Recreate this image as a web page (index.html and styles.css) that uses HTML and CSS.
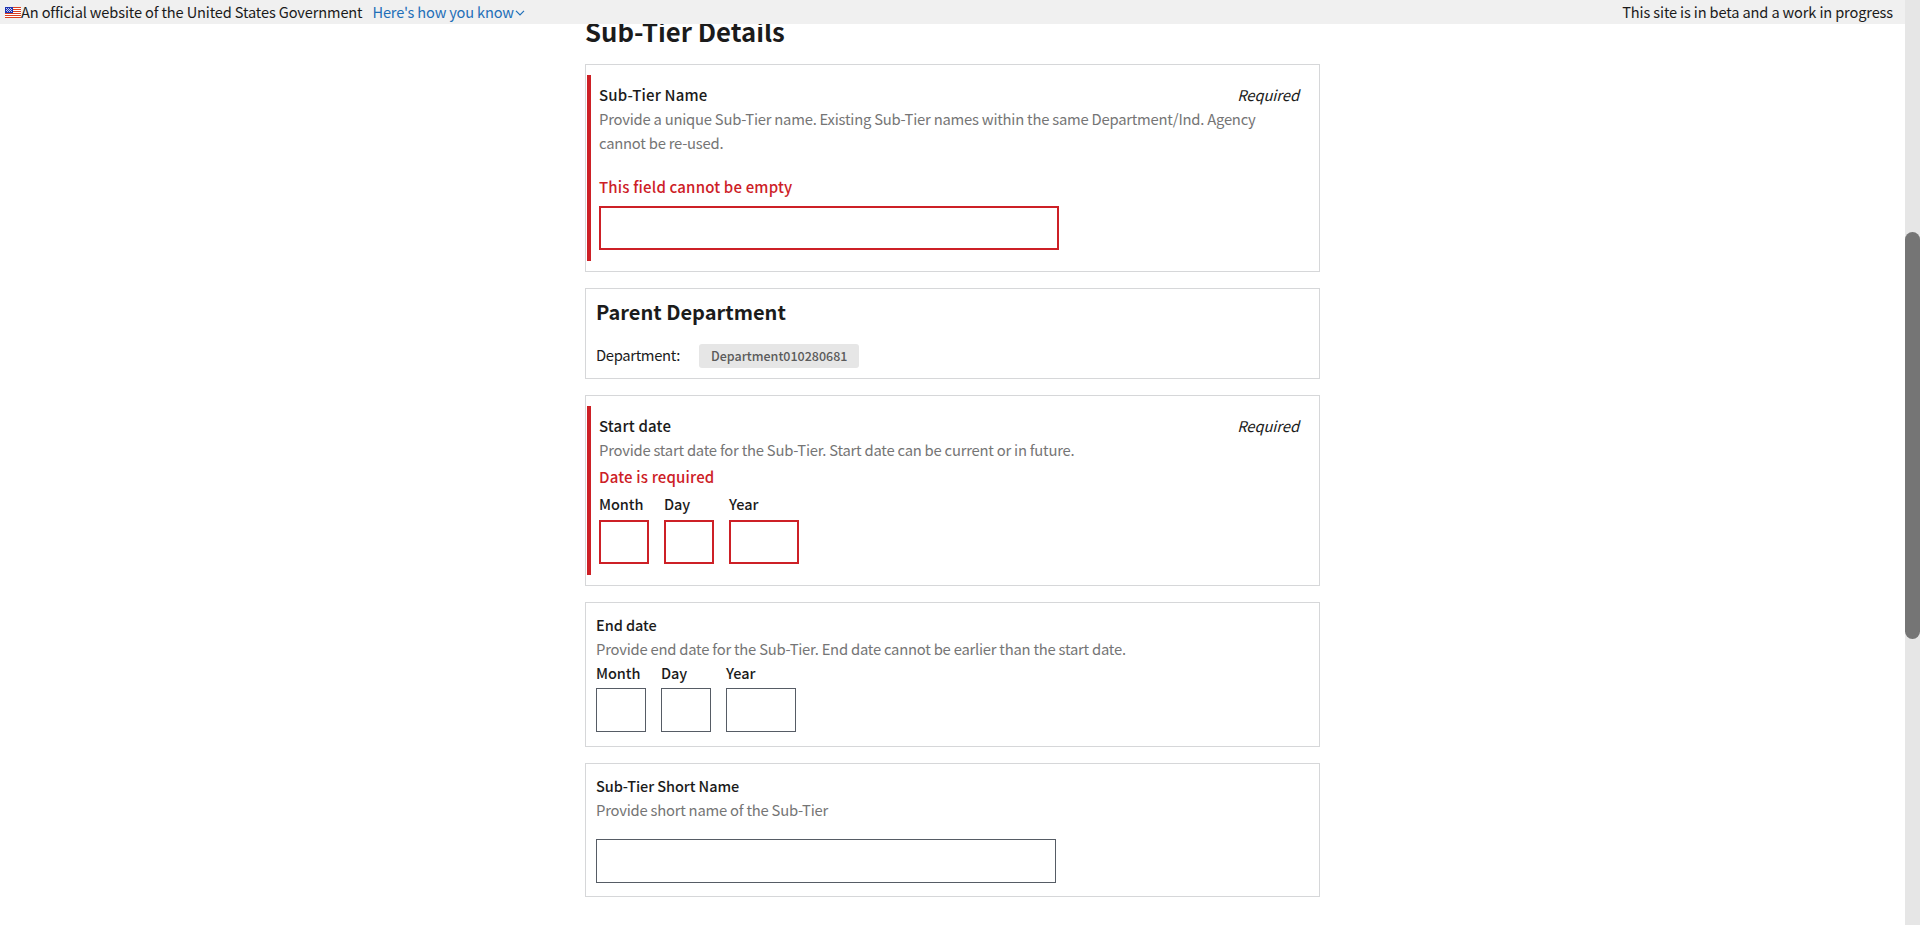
FILE: index.html
```
<!DOCTYPE html>
<html lang="en">
<head>
<meta charset="utf-8">
<title>Sub-Tier Details</title>
<link rel="stylesheet" href="styles.css">
</head>
<body>
<div class="page">
  <div class="viewport">
    <header class="banner">
      <div class="banner-left">
        <svg class="flag" viewBox="0 0 16 11" width="16" height="11" shape-rendering="crispEdges">
          <rect width="16" height="11" fill="#fff"/>
          <path d="M0 0.5h16M0 2.5h16M0 4.5h16M0 6.5h16M0 8.5h16M0 10.5h16" stroke="#db3e1f"/>
          <rect width="8" height="6" fill="#1e33b1"/>
          <path d="M1 1h1v1h-1zM3 1h1v1h-1zM5 1h1v1h-1zM2 2h1v1h-1zM4 2h1v1h-1zM6 2h1v1h-1zM1 3h1v1h-1zM3 3h1v1h-1zM5 3h1v1h-1zM2 4h1v1h-1zM4 4h1v1h-1zM6 4h1v1h-1z" fill="#c5cbee"/>
        </svg>
        <span class="official">An official website of the United States Government</span>
        <a class="know"><span>Here's how you know</span><svg class="chevron" viewBox="0 0 10 6" width="10" height="6"><path d="M1 0.8L5 4.8L9 0.8" fill="none" stroke="#1f6fb8" stroke-width="1.2"/></svg></a>
      </div>
      <span class="beta">This site is in beta and a work in progress</span>
    </header>
    <main class="content">
      <h1 class="title">Sub-Tier Details</h1>

      <section class="card card-name">
        <div class="error-group">
          <div class="label-row"><label class="label">Sub-Tier Name</label><em class="required">Required</em></div>
          <p class="hint hint-name">Provide a unique Sub-Tier name. Existing Sub-Tier names within the same Department/Ind. Agency cannot be re-used.</p>
          <p class="error error-name">This field cannot be empty</p>
          <div class="input input-wide invalid"></div>
        </div>
      </section>

      <section class="card card-parent">
        <h2 class="subtitle">Parent Department</h2>
        <div class="parent-row"><span class="parent-label">Department:</span><span class="tag">Department010280681</span></div>
      </section>

      <section class="card card-start">
        <div class="error-group">
          <div class="label-row"><label class="label">Start date</label><em class="required">Required</em></div>
          <p class="hint">Provide start date for the Sub-Tier. Start date can be current or in future.</p>
          <p class="error error-date">Date is required</p>
          <div class="date">
            <div class="field"><label class="label small">Month</label><div class="input invalid"></div></div>
            <div class="field"><label class="label small">Day</label><div class="input invalid"></div></div>
            <div class="field year"><label class="label small">Year</label><div class="input invalid"></div></div>
          </div>
        </div>
      </section>

      <section class="card card-end">
        <label class="label small">End date</label>
        <p class="hint">Provide end date for the Sub-Tier. End date cannot be earlier than the start date.</p>
        <div class="date">
          <div class="field"><label class="label small">Month</label><div class="input"></div></div>
          <div class="field"><label class="label small">Day</label><div class="input"></div></div>
          <div class="field year"><label class="label small">Year</label><div class="input"></div></div>
        </div>
      </section>

      <section class="card card-short">
        <label class="label small">Sub-Tier Short Name</label>
        <p class="hint">Provide short name of the Sub-Tier</p>
        <div class="input input-wide input-short"></div>
      </section>
    </main>
  </div>
  <div class="scrollbar"><div class="thumb"></div></div>
</div>
</body>
</html>
```
FILE: styles.css
```
* { box-sizing: border-box; }
body, h1, h2, p { margin: 0; }
body {
  background: #fff;
  color: #1b1b1b;
  font-family: "Noto Sans CJK SC", "Noto Sans", sans-serif;
  font-size: 14.8px;
  line-height: 24px;
  letter-spacing: -0.23px;
}
.page { display: flex; height: 925px; overflow: hidden; }
.viewport { flex: 1; overflow: hidden; }

.banner {
  display: flex;
  justify-content: space-between;
  position: relative;
  z-index: 1;
  height: 24px;
  padding: 0 12px 0 5px;
  background: #f0f0f0;
  font-size: 14.6px;
  letter-spacing: -0.135px;
}
.banner-left { display: flex; }
.flag { margin-top: 7px; }
.know { display: flex; margin-left: 10px; color: #1f6fb8; letter-spacing: -0.18px; }
.chevron { margin: 10px 0 0 1px; }

.content { width: 735px; margin-left: 585px; }
.title {
  height: 40px;
  margin-top: -8px;
  padding-top: 1px;
  font-size: 25.7px;
  line-height: 28px;
  letter-spacing: 0;
}
.card {
  display: flex;
  flex-direction: column;
  margin-bottom: 16px;
  padding: 10px;
  border: 1px solid #d6d7d9;
}
.title + .card { margin-top: 8px; }
.card-name { height: 208px; }
.card-parent { height: 91px; }
.card-start { height: 191px; }
.card-end { height: 145px; }
.card-short { height: 134px; }

.error-group {
  flex: 1;
  margin-left: -9px;
  padding: 8px 9px 0 8px;
  border-left: 4px solid #cd2026;
}
.label-row { display: flex; justify-content: space-between; }
.label { font-size: 15px; font-weight: 500; letter-spacing: 0.17px; white-space: nowrap; }
.label.small { font-size: 14.5px; letter-spacing: -0.06px; }
.required { padding-right: 1px; letter-spacing: -0.1px; }
.hint { color: #757575; }
.hint-name { width: 690px; }
.error { color: #cd2026; font-size: 15px; font-weight: 500; letter-spacing: 0.17px; }
.error-name { padding: 20px 0 7px; }
.error-date { padding-top: 3px; }

.input { height: 44px; border: 1px solid #565c65; background: #fff; }
.input.invalid { border: 2px solid #cd2026; }
.input-wide { width: 460px; }
.input-short { margin-top: 17px; }

.date { display: flex; gap: 15px; }
.field { display: flex; flex-direction: column; width: 50px; }
.field.year { width: 70px; }
.field .input { margin-top: 3px; }
.error-group .date { padding-top: 3px; }
.error-group .field .input { margin-top: 4px; }

.subtitle { font-size: 20px; line-height: 26px; letter-spacing: 0; }
.parent-row { display: flex; align-items: flex-start; margin-top: 19px; }
.parent-label { line-height: 22px; letter-spacing: -0.35px; }
.tag {
  margin-left: 19px;
  padding: 0 12px;
  border-radius: 3px;
  background: #e6e6e6;
  color: #5b5b5b;
  font-size: 12.5px;
  font-weight: 500;
  letter-spacing: 0;
}

.scrollbar { width: 15px; background: #e6e6e6; padding-top: 232px; }
.thumb { height: 407px; border-radius: 8px; background: #757575; }
```
